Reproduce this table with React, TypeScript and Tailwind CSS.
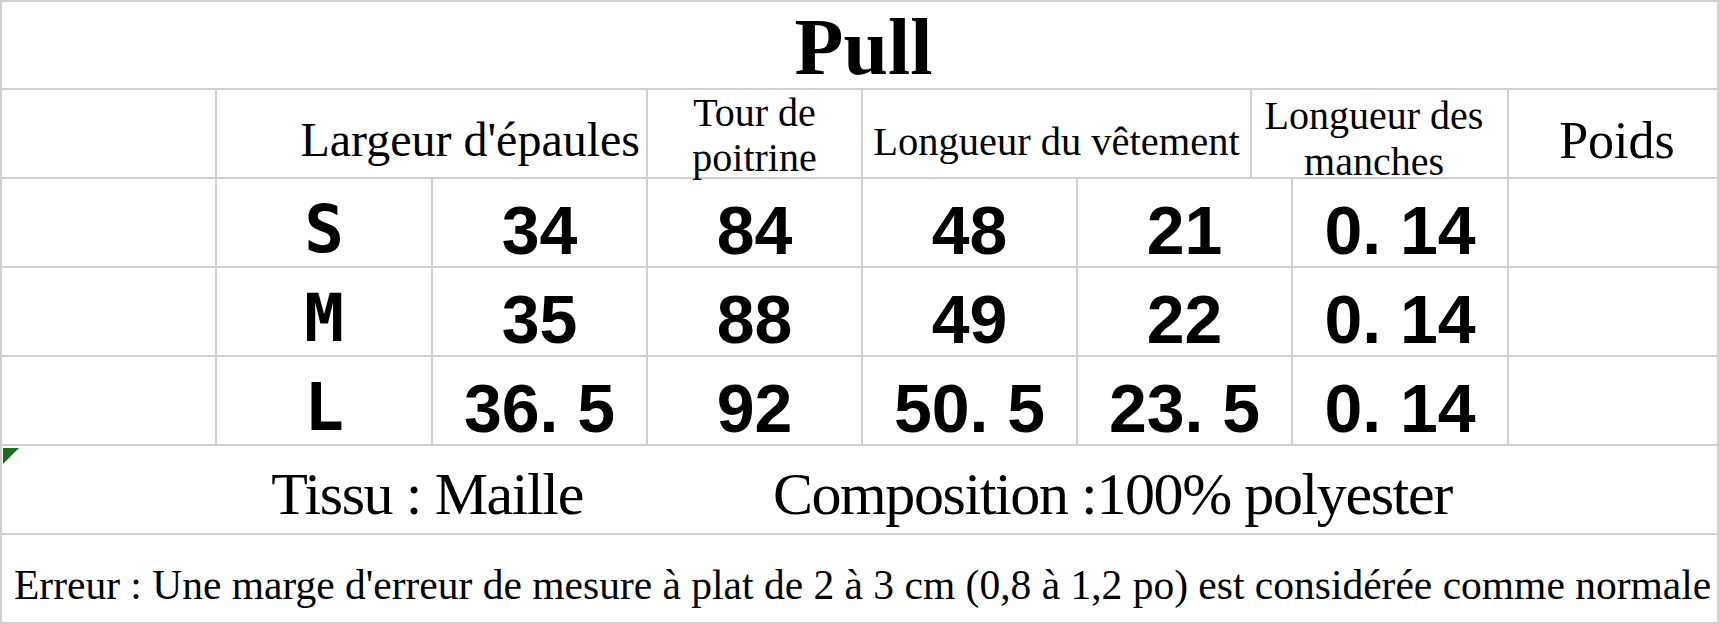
import type { ReactNode } from "react";

const serif = "font-['Liberation_Serif','Times_New_Roman',serif]";
const sans = "font-['Liberation_Sans',Arial,sans-serif]";
const mono = "font-['DejaVu_Sans_Mono',monospace]";

const rows = [
  { size: "S", values: ["34", "84", "48", "21", "0. 14"] },
  { size: "M", values: ["35", "88", "49", "22", "0. 14"] },
  { size: "L", values: ["36. 5", "92", "50. 5", "23. 5", "0. 14"] },
];

// une cellule de chiffres (gras, centré)
function Cell({ children }: { children?: ReactNode }) {
  return (
    <div className="flex items-center justify-center border-r-2 border-[#d0d0d0] pt-[14px] text-[68px] leading-none font-bold whitespace-pre text-black">
      {children}
    </div>
  );
}

function DataRow({ size, values }: { size: string; values: string[] }) {
  return (
    <div className={`grid h-[89px] grid-cols-[215px_216px_215px_215px_215px_215px_216px_1fr] grid-rows-1 border-b-2 border-[#d0d0d0] ${sans}`}>
      <div className="border-r-2 border-[#d0d0d0]" />
      <Cell>
        <span className={`${mono} text-[66px]`}>{size}</span>
      </Cell>
      {values.map((v, i) => (
        <Cell key={i}>{v}</Cell>
      ))}
      <div />
    </div>
  );
}

export default function App() {
  return (
    <div className={`h-[624px] w-[1719px] overflow-hidden border-x-2 border-t-2 border-[#d0d0d0] bg-white text-black ${serif}`}>
      {/* Titre */}
      <div className="flex h-[88px] items-center justify-center border-b-2 border-[#d0d0d0] pt-[3px] pl-[8px]">
        <h1 className="text-[80px] leading-none font-bold">Pull</h1>
      </div>

      {/* En-têtes */}
      <div className="grid h-[89px] grid-cols-[215px_431px_215px_389px_257px_1fr] grid-rows-1 border-b-2 border-[#d0d0d0]">
        <div className="border-r-2 border-[#d0d0d0]" />
        <div className="flex items-center justify-end border-r-2 border-[#d0d0d0] pt-3 pr-[6px] text-[48px] leading-none whitespace-nowrap">
          Largeur d'épaules
        </div>
        <div className="flex items-center justify-center border-r-2 border-[#d0d0d0] pt-[3px] text-center text-[40px] leading-[45px] whitespace-nowrap">
          Tour de
          <br />
          poitrine
        </div>
        <div className="flex items-center justify-center border-r-2 border-[#d0d0d0] pt-[18px] text-[40.5px] leading-none whitespace-nowrap">
          Longueur du vêtement
        </div>
        <div className="flex items-center justify-center border-r-2 border-[#d0d0d0] pt-[10px] pr-[11px] text-center text-[40px] leading-[46px] whitespace-nowrap">
          Longueur des
          <br />
          manches
        </div>
        <div className="flex items-center justify-center pt-[14px] pl-[8px] text-[52px] leading-none">Poids</div>
      </div>

      {rows.map((r) => (
        <DataRow key={r.size} size={r.size} values={r.values} />
      ))}

      {/* Tissu / composition */}
      <div className="relative flex h-[89px] items-center justify-center gap-[190px] border-b-2 border-[#d0d0d0] pt-2 pl-[4px] text-[60px] leading-none tracking-[-1.4px] whitespace-nowrap">
        <svg className="absolute top-[2px] left-[1px]" width="16" height="16" viewBox="0 0 16 16">
          <polygon points="0,0 16,0 0,16" fill="#1d6b1d" />
        </svg>
        <span>Tissu : Maille</span>
        <span>Composition :100% polyester</span>
      </div>

      {/* Erreur */}
      <div className="flex h-[89px] items-center border-b-2 border-[#d0d0d0] pt-[15px] pl-[12px] text-[41.5px] leading-none whitespace-nowrap">
        Erreur : Une marge d'erreur de mesure à plat de 2 à 3 cm (0,8 à 1,2 po) est considérée comme normale
      </div>
    </div>
  );
}
